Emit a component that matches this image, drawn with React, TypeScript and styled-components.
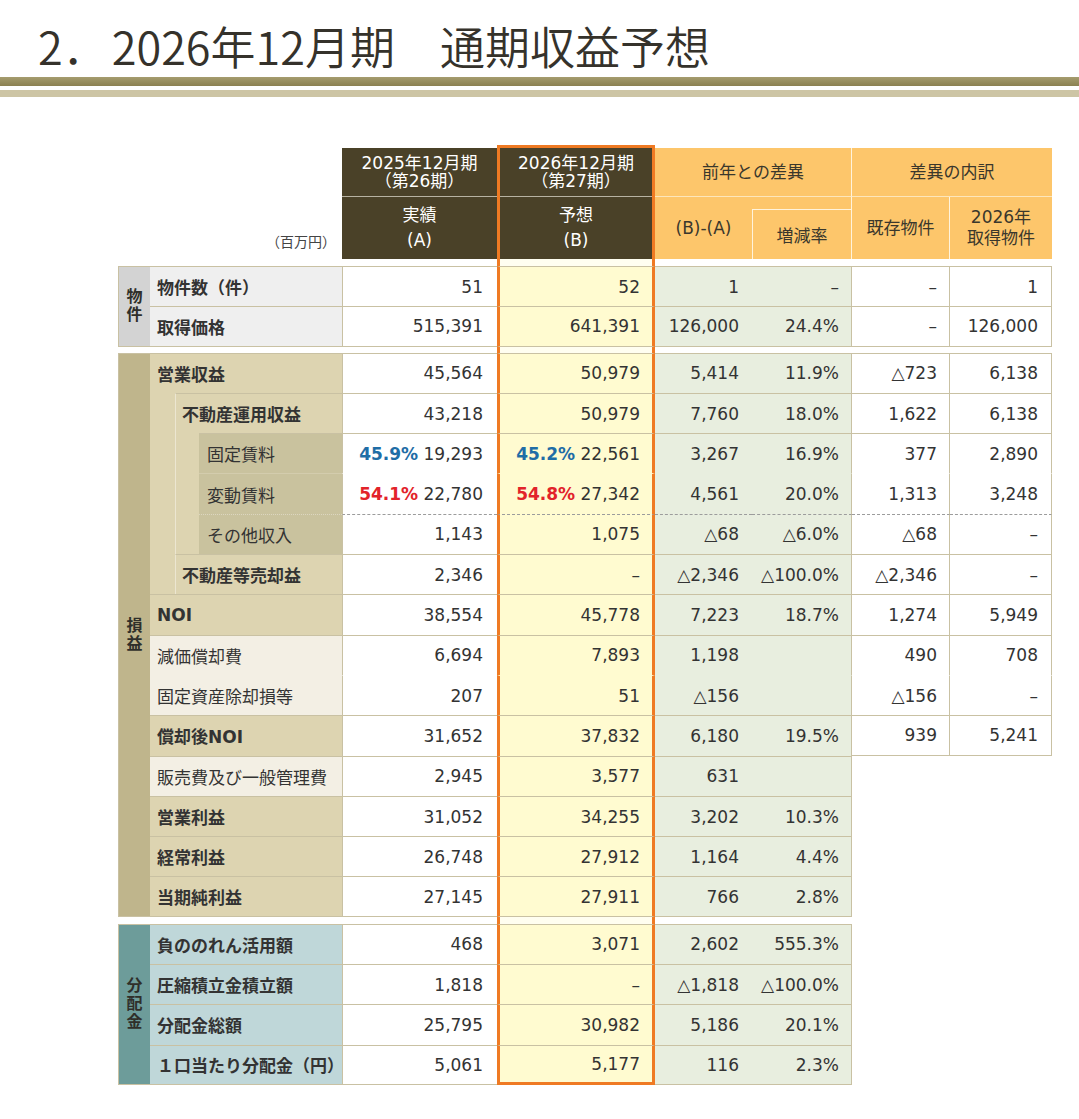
import React from 'react';
import styled, { createGlobalStyle } from 'styled-components';

const COLS = '32px 192px 155px 158px 97px 100px 98px 102px';
const TAN = '#c9c1a3';
const ORANGE = '#ef7a23';
const HEAD_DARK = '#4a4128';
const HEAD_ORANGE = '#fdc66b';
const DIFF_BG = '#e8eedf';
const B_BG = '#fffbd0';

const GlobalStyle = createGlobalStyle`
  html, body { margin: 0; padding: 0; background: #fff; }
  body { font-family: "Noto Sans CJK JP", "Noto Sans", sans-serif; color: #333; }
  * { box-sizing: border-box; }
`;

const Page = styled.div`
  width: 1079px;
  padding-top: 23px;
  padding-bottom: 30px;
`;

const Title = styled.h1`
  margin: 0;
  padding-left: 38px;
  font-family: "Noto Sans CJK JP", sans-serif;
  font-weight: 350;
  font-size: 45px;
  line-height: 45px;
  color: #35322b;
  white-space: pre;
`;

const TitleNum = styled.span`
  margin-right: 4px;
`;

const RuleThick = styled.div`
  margin-top: 9px;
  height: 9px;
  background: linear-gradient(#a59c6e, #8b8152);
`;

const RuleThin = styled.div`
  margin-top: 4px;
  height: 7px;
  background: #cdc5a5;
`;

const TableWrap = styled.div`
  margin: 48px 0 0 118px;
  width: 934px;
  font-family: "DejaVu Sans", "Noto Sans CJK JP", sans-serif;
`;

/* ---------- header ---------- */
const HeadGrid = styled.div`
  display: grid;
  grid-template-columns: ${COLS};
  grid-template-rows: 3px 49px 62px;
`;

const Unit = styled.div`
  grid-column: 1 / 3;
  grid-row: 2 / 4;
  display: flex;
  align-items: flex-end;
  justify-content: flex-end;
  padding: 0 6px 8px 0;
  font-family: "Noto Sans CJK JP", sans-serif;
  font-size: 14px;
  color: #444;
`;

const HeadCell = styled.div<{ $dark?: boolean; $lh?: number; $sep?: boolean; $col?: string; $row?: string }>`
  ${(p) => (p.$col ? `grid-column: ${p.$col};` : '')}
  ${(p) => (p.$row ? `grid-row: ${p.$row};` : '')}
  display: flex;
  flex-direction: column;
  align-items: center;
  justify-content: center;
  text-align: center;
  background: ${(p) => (p.$dark ? HEAD_DARK : HEAD_ORANGE)};
  color: ${(p) => (p.$dark ? '#fff' : '#3a372c')};
  font-size: 17px;
  line-height: ${(p) => p.$lh ?? 20}px;
  border-bottom: ${(p) => (p.$sep ? `1px solid ${p.$dark ? '#b7b2a2' : '#fde6bb'}` : 'none')};
`;

const OrangeHead = styled(HeadCell)<{ $right?: boolean }>`
  border-right: ${(p) => (p.$right ? '1px solid #fff3dc' : 'none')};
`;

const HeadB = styled.div`
  grid-column: 4;
  grid-row: 1 / 4;
  display: grid;
  grid-template-rows: 49px 62px;
  border: 3px solid ${ORANGE};
  border-bottom: none;
`;

const RateHead = styled.div`
  grid-column: 6;
  grid-row: 3;
  display: flex;
  flex-direction: column;
  background: ${HEAD_ORANGE};
  border-right: 1px solid #fff3dc;
`;

const RateBox = styled.div`
  flex: 1;
  margin-top: 12px;
  display: flex;
  align-items: center;
  justify-content: center;
  border-top: 1px solid #fff3dc;
  border-left: 1px solid #fff3dc;
  font-size: 17px;
  color: #3a372c;
`;

/* ---------- gaps ---------- */
const GapRow = styled.div<{ $h: number }>`
  display: grid;
  grid-template-columns: ${COLS};
  height: ${(p) => p.$h}px;
`;

const GapB = styled.div`
  grid-column: 4;
  border-left: 3px solid ${ORANGE};
  border-right: 3px solid ${ORANGE};
  background: #fffef0;
`;

/* ---------- body ---------- */
type Line = 'solid' | 'none' | 'dashed';
type LabelLine = 'solid' | 'faint' | 'dotted' | 'none';
type Tone = 'gray' | 'khaki' | 'sub' | 'light' | 'teal';
type Val = string | { pct: string; c: 'blue' | 'red'; v: string };

interface Row {
  label: string;
  level?: 0 | 1 | 2;
  bold?: boolean;
  tone: Tone;
  line?: Line;
  labelLine?: LabelLine;
  a: Val;
  b: Val;
  d1: string;
  d2: string;
  e?: [string, string];
}

const TONE_BG: Record<Tone, string> = {
  gray: '#efefef',
  khaki: '#ddd4b1',
  sub: '#c9c29e',
  light: '#f3efe4',
  teal: '#bfd7d9',
};

const GROUP_BG: Record<string, string> = {
  gray: '#d3d3d3',
  khaki: '#bfb58c',
  teal: '#6d9c9a',
};

const Section = styled.div<{ $rows: number }>`
  display: grid;
  grid-template-columns: ${COLS};
  grid-template-rows: repeat(${(p) => p.$rows}, 40.3px);
`;

const GroupCell = styled.div<{ $bg: string }>`
  grid-column: 1;
  grid-row: 1 / -1;
  display: flex;
  align-items: center;
  justify-content: center;
  background: ${(p) => p.$bg};
  border: 1px solid ${TAN};
  border-right: none;
`;

const GroupText = styled.span`
  writing-mode: vertical-rl;
  text-orientation: upright;
  font-family: "Noto Sans CJK JP", sans-serif;
  font-weight: 700;
  font-size: 16px;
  letter-spacing: 2px;
  line-height: 1;
  color: #2f2f2a;
`;

const LabelCell = styled.div<{ $last: boolean }>`
  grid-column: 2;
  display: flex;
  background: ${TONE_BG.khaki};
  border-bottom: ${(p) => (p.$last ? `1px solid ${TAN}` : 'none')};
`;

const Indent = styled.div<{ $w: number; $rule?: boolean }>`
  flex: none;
  width: ${(p) => p.$w}px;
  background: ${TONE_BG.khaki};
  border-left: ${(p) => (p.$rule ? '1px solid #ece6d1' : 'none')};
`;

const labelBorder = (l: LabelLine) =>
  l === 'solid'
    ? `1px solid ${TAN}`
    : l === 'faint'
    ? '1px solid #d3ccad'
    : l === 'dotted'
    ? '1px dotted #dcd6c0'
    : '1px solid transparent';

const LabelText = styled.div<{ $bg: string; $line: LabelLine; $bold: boolean; $pad: number; $rule: boolean }>`
  flex: 1;
  display: flex;
  align-items: center;
  padding-left: ${(p) => p.$pad}px;
  background: ${(p) => p.$bg};
  border-top: ${(p) => labelBorder(p.$line)};
  border-left: ${(p) => (p.$rule ? '1px solid #ece6d1' : 'none')};
  font-family: "DejaVu Sans", "Noto Sans CJK JP", sans-serif;
  font-weight: ${(p) => (p.$bold ? 700 : 400)};
  font-size: 17px;
  color: #333;
  white-space: nowrap;
`;

type Kind = 'a' | 'b' | 'd1' | 'd2' | 'e1' | 'e2';

const KIND: Record<Kind, { col: number; bg: string; sides: string; pad: number }> = {
  a: { col: 3, bg: '#fff', sides: `border-left: 1px solid ${TAN};`, pad: 14 },
  b: { col: 4, bg: B_BG, sides: `border-left: 3px solid ${ORANGE}; border-right: 3px solid ${ORANGE};`, pad: 12 },
  d1: { col: 5, bg: DIFF_BG, sides: '', pad: 13 },
  d2: { col: 6, bg: DIFF_BG, sides: `border-right: 1px solid ${TAN};`, pad: 12 },
  e1: { col: 7, bg: '#fff', sides: `border-right: 1px solid ${TAN};`, pad: 12 },
  e2: { col: 8, bg: '#fff', sides: `border-right: 1px solid ${TAN};`, pad: 13 },
};

const lineBorder = (l: Line) =>
  l === 'solid' ? `1px solid ${TAN}` : l === 'dashed' ? '1px dashed #9c9c9c' : '1px solid transparent';

const ValueCell = styled.div<{ $kind: Kind; $line: Line; $bottom: 'none' | 'tan' | 'orange' }>`
  grid-column: ${(p) => KIND[p.$kind].col};
  display: flex;
  align-items: center;
  justify-content: flex-end;
  padding-right: ${(p) => KIND[p.$kind].pad}px;
  background: ${(p) => KIND[p.$kind].bg};
  ${(p) => KIND[p.$kind].sides}
  border-top: ${(p) => lineBorder(p.$line)};
  border-bottom: ${(p) =>
    p.$bottom === 'tan' ? `1px solid ${TAN}` : p.$bottom === 'orange' ? `3px solid ${ORANGE}` : 'none'};
  font-family: "DejaVu Sans", "Noto Sans CJK JP", sans-serif;
  font-size: 17px;
  color: #333;
  white-space: nowrap;
`;

const Blank = styled.div<{ $col: number }>`
  grid-column: ${(p) => p.$col};
`;

const Pct = styled.span<{ $c: 'blue' | 'red' }>`
  font-weight: 700;
  color: ${(p) => (p.$c === 'blue' ? '#1f6da6' : '#e2232a')};
`;

const renderVal = (v: Val) =>
  typeof v === 'string' ? (
    <span>{v}</span>
  ) : (
    <span>
      <Pct $c={v.c}>{v.pct}</Pct> {v.v}
    </span>
  );

interface SectionProps {
  group: string;
  groupTone: 'gray' | 'khaki' | 'teal';
  rows: Row[];
  finalSection?: boolean;
}

const SectionView: React.FC<SectionProps> = ({ group, groupTone, rows, finalSection }) => (
  <Section $rows={rows.length}>
    <GroupCell $bg={GROUP_BG[groupTone]}>
      <GroupText>{group}</GroupText>
    </GroupCell>
    {rows.map((r, i) => {
      const last = i === rows.length - 1;
      const line = r.line ?? 'solid';
      const labelLine = r.labelLine ?? (line === 'dashed' ? 'dotted' : line === 'none' ? 'none' : 'solid');
      const level = r.level ?? 0;
      const bottom: 'none' | 'tan' = last ? 'tan' : 'none';
      const eBottom: 'none' | 'tan' = last || !rows[i + 1].e ? 'tan' : 'none';
      const pad = level === 0 ? 7 : level === 1 ? 6 : 8;
      return (
        <React.Fragment key={r.label}>
          <LabelCell $last={last}>
            {level >= 1 && <Indent $w={25} />}
            {level >= 2 && <Indent $w={24} $rule />}
            <LabelText
              $bg={TONE_BG[r.tone]}
              $line={labelLine}
              $bold={!!r.bold}
              $pad={pad}
              $rule={level === 1}
            >
              {r.label}
            </LabelText>
          </LabelCell>
          <ValueCell $kind="a" $line={line} $bottom={bottom}>
            {renderVal(r.a)}
          </ValueCell>
          <ValueCell $kind="b" $line={line} $bottom={last && finalSection ? 'orange' : bottom}>
            {renderVal(r.b)}
          </ValueCell>
          <ValueCell $kind="d1" $line={line} $bottom={bottom}>
            {r.d1}
          </ValueCell>
          <ValueCell $kind="d2" $line={line} $bottom={bottom}>
            {r.d2}
          </ValueCell>
          {r.e ? (
            <>
              <ValueCell $kind="e1" $line={line} $bottom={eBottom}>
                {r.e[0]}
              </ValueCell>
              <ValueCell $kind="e2" $line={line} $bottom={eBottom}>
                {r.e[1]}
              </ValueCell>
            </>
          ) : (
            <>
              <Blank $col={7} />
              <Blank $col={8} />
            </>
          )}
        </React.Fragment>
      );
    })}
  </Section>
);

const propertyRows: Row[] = [
  { label: '物件数（件）', bold: true, tone: 'gray', a: '51', b: '52', d1: '1', d2: '–', e: ['–', '1'] },
  { label: '取得価格', bold: true, tone: 'gray', a: '515,391', b: '641,391', d1: '126,000', d2: '24.4%', e: ['–', '126,000'] },
];

const plRows: Row[] = [
  { label: '営業収益', bold: true, tone: 'khaki', a: '45,564', b: '50,979', d1: '5,414', d2: '11.9%', e: ['△723', '6,138'] },
  { label: '不動産運用収益', level: 1, bold: true, tone: 'khaki', a: '43,218', b: '50,979', d1: '7,760', d2: '18.0%', e: ['1,622', '6,138'] },
  {
    label: '固定賃料',
    level: 2,
    tone: 'sub',
    a: { pct: '45.9%', c: 'blue', v: '19,293' },
    b: { pct: '45.2%', c: 'blue', v: '22,561' },
    d1: '3,267',
    d2: '16.9%',
    e: ['377', '2,890'],
  },
  {
    label: '変動賃料',
    level: 2,
    tone: 'sub',
    line: 'none',
    labelLine: 'faint',
    a: { pct: '54.1%', c: 'red', v: '22,780' },
    b: { pct: '54.8%', c: 'red', v: '27,342' },
    d1: '4,561',
    d2: '20.0%',
    e: ['1,313', '3,248'],
  },
  { label: 'その他収入', level: 2, tone: 'sub', line: 'dashed', a: '1,143', b: '1,075', d1: '△68', d2: '△6.0%', e: ['△68', '–'] },
  { label: '不動産等売却益', level: 1, bold: true, tone: 'khaki', a: '2,346', b: '–', d1: '△2,346', d2: '△100.0%', e: ['△2,346', '–'] },
  { label: 'NOI', bold: true, tone: 'khaki', a: '38,554', b: '45,778', d1: '7,223', d2: '18.7%', e: ['1,274', '5,949'] },
  { label: '減価償却費', tone: 'light', a: '6,694', b: '7,893', d1: '1,198', d2: '', e: ['490', '708'] },
  { label: '固定資産除却損等', tone: 'light', line: 'none', a: '207', b: '51', d1: '△156', d2: '', e: ['△156', '–'] },
  { label: '償却後NOI', bold: true, tone: 'khaki', a: '31,652', b: '37,832', d1: '6,180', d2: '19.5%', e: ['939', '5,241'] },
  { label: '販売費及び一般管理費', tone: 'light', a: '2,945', b: '3,577', d1: '631', d2: '' },
  { label: '営業利益', bold: true, tone: 'khaki', a: '31,052', b: '34,255', d1: '3,202', d2: '10.3%' },
  { label: '経常利益', bold: true, tone: 'khaki', a: '26,748', b: '27,912', d1: '1,164', d2: '4.4%' },
  { label: '当期純利益', bold: true, tone: 'khaki', a: '27,145', b: '27,911', d1: '766', d2: '2.8%' },
];

const distRows: Row[] = [
  { label: '負ののれん活用額', bold: true, tone: 'teal', a: '468', b: '3,071', d1: '2,602', d2: '555.3%' },
  { label: '圧縮積立金積立額', bold: true, tone: 'teal', a: '1,818', b: '–', d1: '△1,818', d2: '△100.0%' },
  { label: '分配金総額', bold: true, tone: 'teal', a: '25,795', b: '30,982', d1: '5,186', d2: '20.1%' },
  { label: '１口当たり分配金（円）', bold: true, tone: 'teal', a: '5,061', b: '5,177', d1: '116', d2: '2.3%' },
];

export default function App() {
  return (
    <>
      <GlobalStyle />
      <Page>
        <Title>
          <TitleNum>2．</TitleNum>2026年12月期　通期収益予想
        </Title>
        <RuleThick />
        <RuleThin />
        <TableWrap>
          <HeadGrid>
            <Unit>（百万円）</Unit>
            <HeadCell $dark $sep $lh={18} $col="3" $row="2">
              <span>2025年12月期</span>
              <span>（第26期）</span>
            </HeadCell>
            <HeadCell $dark $lh={25} $col="3" $row="3">
              <span>実績</span>
              <span>(A)</span>
            </HeadCell>
            <HeadB>
              <HeadCell $dark $sep $lh={18}>
                <span>2026年12月期</span>
                <span>（第27期）</span>
              </HeadCell>
              <HeadCell $dark $lh={25}>
                <span>予想</span>
                <span>(B)</span>
              </HeadCell>
            </HeadB>
            <OrangeHead $sep $right $col="5 / 7" $row="2">
              前年との差異
            </OrangeHead>
            <OrangeHead $col="5" $row="3">
              (B)-(A)
            </OrangeHead>
            <RateHead>
              <RateBox>増減率</RateBox>
            </RateHead>
            <OrangeHead $sep $col="7 / 9" $row="2">
              差異の内訳
            </OrangeHead>
            <OrangeHead $right $col="7" $row="3">
              既存物件
            </OrangeHead>
            <OrangeHead $lh={21} $col="8" $row="3">
              <span>2026年</span>
              <span>取得物件</span>
            </OrangeHead>
          </HeadGrid>
          <GapRow $h={7}>
            <GapB />
          </GapRow>
          <SectionView group="物件" groupTone="gray" rows={propertyRows} />
          <GapRow $h={6}>
            <GapB />
          </GapRow>
          <SectionView group="損益" groupTone="khaki" rows={plRows} />
          <GapRow $h={7}>
            <GapB />
          </GapRow>
          <SectionView group="分配金" groupTone="teal" rows={distRows} finalSection />
        </TableWrap>
      </Page>
    </>
  );
}
